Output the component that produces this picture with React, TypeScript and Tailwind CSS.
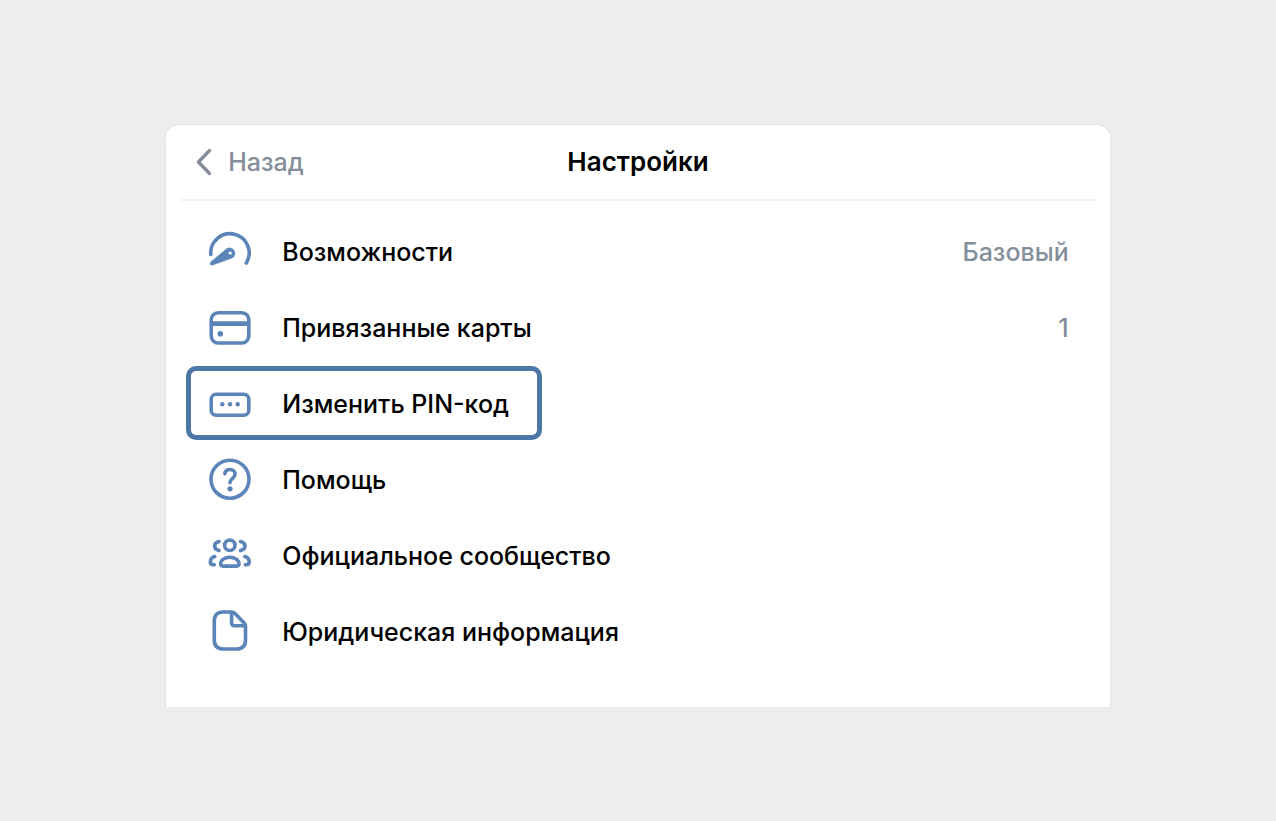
import React from "react";
import clsx from "clsx";

type IconProps = { children: React.ReactNode };

const Icon = ({ children }: IconProps) => (
  <svg
    viewBox="0 0 48 48"
    className="size-12 shrink-0 text-[#5b84b9]"
    fill="none"
    stroke="currentColor"
    strokeWidth="3.6"
    strokeLinecap="round"
    strokeLinejoin="round"
    aria-hidden="true"
  >
    {children}
  </svg>
);

const GaugeIcon = () => (
  <Icon>
    <path d="M4.8 26.4A19.2 19.2 0 1 1 40.3 35" />
    <path
      d="M5.3 33.4 20.8 20.6A5.4 5.4 0 1 1 26.2 30.1L6.8 37.1C4.2 38 3.1 35.2 5.3 33.4ZM24.2 23.3a1.8 1.8 0 1 0 0 3.6 1.8 1.8 0 0 0 0-3.6Z"
      fill="currentColor"
      fillRule="evenodd"
      strokeWidth="0.4"
    />
  </Icon>
);

const CardIcon = () => (
  <Icon>
    <rect x="5.2" y="8.8" width="37.6" height="30.2" rx="7" />
    <path d="M5 19.6h38" strokeWidth="4.6" strokeLinecap="butt" />
    <circle cx="14.3" cy="29.8" r="2.8" fill="currentColor" stroke="none" />
  </Icon>
);

const PinIcon = () => (
  <Icon>
    <rect x="5.2" y="14.2" width="37.6" height="21" rx="5" />
    <g fill="currentColor" stroke="none">
      <circle cx="16.3" cy="24.2" r="2.2" />
      <circle cx="24" cy="24.2" r="2.2" />
      <circle cx="31.7" cy="24.2" r="2.2" />
    </g>
  </Icon>
);

const HelpIcon = () => (
  <Icon>
    <circle cx="24" cy="23.2" r="19" />
    <path d="M18.8 17.6c.4-2.5 2.4-4.1 5.1-4.1 3 0 5.200 1.900 5.200 4.600 0 4.100-5.100 4.400-5.100 8.600" />
    <circle cx="24" cy="32.8" r="2.6" fill="currentColor" stroke="none" />
  </Icon>
);

const CommunityIcon = () => (
  <Icon>
    <circle cx="23.8" cy="13.3" r="5.2" />
    <path d="M23.8 25.2c-5 0-9.2 3-9.2 6.4 0 1.5 1 2.5 2.6 2.5h13.2c1.6 0 2.6-1 2.6-2.5 0-3.4-4.2-6.4-9.2-6.4Z" />
    <path d="M13 9.600c-2.600.6-4.400 2.300-4.400 4.500s1.800 3.900 4.400 4.500" />
    <path d="M34.600 9.600c2.600.6 4.400 2.300 4.400 4.500s-1.800 3.900-4.400 4.500" />
    <path d="M8.800 24.6c-2.700.8-4.400 2.800-4.400 5.300 0 1.700 1.300 2.800 3.100 2.800h.8" />
    <path d="M38.800 24.6c2.700.8 4.400 2.800 4.400 5.300 0 1.700-1.300 2.800-3.100 2.800h-.8" />
  </Icon>
);

const DocumentIcon = () => (
  <Icon>
    <path d="M17 4h8.4c1.5 0 2.6.5 3.6 1.5l9 9.2c1 1 1.5 2.1 1.5 3.6V32c0 6-3 9-9 9H17.3c-6 0-9-3-9-9V13c0-6 3-9 8.7-9Z" />
    <path d="M25.6 4.5v10.3c0 2 1 3 3 3h10.3" />
  </Icon>
);

type Item = {
  label: string;
  icon: React.ReactNode;
  value?: string;
  highlighted?: boolean;
};

const items: Item[] = [
  { label: "Возможности", icon: <GaugeIcon />, value: "Базовый" },
  { label: "Привязанные карты", icon: <CardIcon />, value: "1" },
  { label: "Изменить PIN-код", icon: <PinIcon />, highlighted: true },
  { label: "Помощь", icon: <HelpIcon /> },
  { label: "Официальное сообщество", icon: <CommunityIcon /> },
  { label: "Юридическая информация", icon: <DocumentIcon /> },
];

const SettingsRow = ({ label, icon, value, highlighted }: Item) => (
  <li className="flex h-[76px]">
    <button
      type="button"
      className={clsx(
        "flex h-[74px] items-center rounded-[10px] border-[5px] pt-0.5 pl-[15px] text-left",
        highlighted
          ? "border-[#4c77a7] pr-7"
          : "w-full border-transparent pr-4",
      )}
    >
      {icon}
      <span className="ml-7 text-black">{label}</span>
      {value && <span className="ml-auto text-[#858e9b]">{value}</span>}
    </button>
  </li>
);

const App = () => {
  return (
    <div className="min-h-screen bg-[#ecedef] pt-[124px] pb-[114px] font-['Inter','Liberation_Sans',sans-serif] text-[25px] leading-8 font-medium">
      <main className="mx-auto w-[74.1%] rounded-t-[14px] border border-b-0 border-[#e1e3e6] bg-white pb-[37px]">
        <header className="mx-[14px] grid h-[76px] grid-cols-3 items-center border-b-2 border-[#f3f3f4] px-3">
          <button
            type="button"
            className="flex items-center gap-3 justify-self-start text-[#858e9b]"
          >
            <svg
              viewBox="0 0 24 32"
              className="h-8 w-6"
              fill="none"
              stroke="currentColor"
              strokeWidth="3.4"
              strokeLinecap="round"
              strokeLinejoin="round"
              aria-hidden="true"
            >
              <path d="M17.5 4.500 6.5 16 17.5 27.500" />
            </svg>
            Назад
          </button>
          <h1 className="text-center text-[26px] font-semibold text-black">
            Настройки
          </h1>
        </header>
        <ul className="px-5 pt-[13px]">
          {items.map((item) => (
            <SettingsRow key={item.label} {...item} />
          ))}
        </ul>
      </main>
    </div>
  );
};

export default App;
